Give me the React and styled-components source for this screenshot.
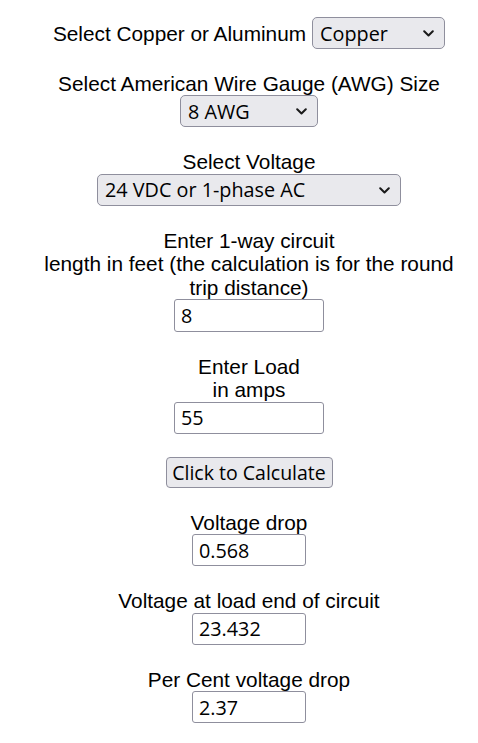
import React from "react";
import styled, { createGlobalStyle } from "styled-components";

const Global = createGlobalStyle`
  html, body { margin: 0; padding: 0; background: #ffffff; }
  body {
    font-family: "Liberation Sans", Arial, sans-serif;
    font-size: 20.8px;
    color: #000000;
  }
`;

const Page = styled.div`
  display: flex;
  flex-direction: column;
  align-items: center;
  gap: 23px;
  padding: 17px 0 30px 20px;
`;

const InlineRow = styled.div`
  display: flex;
  align-items: center;
  gap: 6px;
  line-height: 23px;
`;

const Field = styled.div`
  display: flex;
  flex-direction: column;
  align-items: center;
`;

const Label = styled.div`
  line-height: 23.4px;
  text-align: center;
  max-width: 440px;
`;

const SelectWrap = styled.div`
  position: relative;
  width: ${(p) => p.$w}px;
  height: 32px;
`;

const Select = styled.select`
  appearance: none;
  -webkit-appearance: none;
  box-sizing: border-box;
  width: 100%;
  height: 100%;
  margin: 0;
  padding: 0 26px 0 7px;
  font-family: "Open Sans", "Noto Sans", sans-serif;
  font-size: 19.8px;
  color: #000;
  background: #e9e9ed;
  border: 1px solid #8f8f9d;
  border-radius: 5px;
  outline: none;
`;

const Chevron = styled.svg`
  position: absolute;
  right: 11px;
  top: 50%;
  margin-top: -3px;
  pointer-events: none;
`;

const Input = styled.input`
  box-sizing: border-box;
  width: ${(p) => p.$w}px;
  height: ${(p) => p.$h}px;
  margin: 0;
  padding: 0 6px;
  font-family: "Open Sans", "Noto Sans", sans-serif;
  font-size: 19.8px;
  color: #000;
  background: #ffffff;
  border: 1px solid #8f8f9d;
  border-radius: 3px;
  outline: none;
`;

const Button = styled.button`
  box-sizing: border-box;
  width: 167px;
  height: 31px;
  margin: 0;
  padding: 0;
  font-family: "Open Sans", "Noto Sans", sans-serif;
  font-size: 19.5px;
  color: #000;
  background: #e9e9ed;
  border: 1px solid #8f8f9d;
  border-radius: 4px;
  cursor: pointer;
`;

function Dropdown({ width, value, options }) {
  return (
    <SelectWrap $w={width}>
      <Select defaultValue={value}>
        {options.map((o) => (
          <option key={o} value={o}>
            {o}
          </option>
        ))}
      </Select>
      <Chevron width="11" height="7" viewBox="0 0 11 7" aria-hidden="true">
        <polyline
          points="1.2,1.2 5.5,5.5 9.8,1.2"
          fill="none"
          stroke="#1a1a1a"
          strokeWidth="2"
          strokeLinecap="round"
          strokeLinejoin="round"
        />
      </Chevron>
    </SelectWrap>
  );
}

export default function App() {
  return (
    <>
      <Global />
      <Page>
        <InlineRow>
          <span>Select Copper or Aluminum</span>
          <Dropdown width={133} value="Copper" options={["Copper", "Aluminum"]} />
        </InlineRow>

        <Field>
          <Label>Select American Wire Gauge (AWG) Size</Label>
          <Dropdown
            width={138}
            value="8 AWG"
            options={["14 AWG", "12 AWG", "10 AWG", "8 AWG", "6 AWG", "4 AWG", "2 AWG"]}
          />
        </Field>

        <Field>
          <Label>Select Voltage</Label>
          <Dropdown
            width={304}
            value="24 VDC or 1-phase AC"
            options={["12 VDC or 1-phase AC", "24 VDC or 1-phase AC", "120 VAC 1-phase"]}
          />
        </Field>

        <Field>
          <Label>
            Enter 1-way circuit
            <br />
            length in feet (the calculation is for the round trip distance)
          </Label>
          <Input $w={150} $h={33} defaultValue="8" />
        </Field>

        <Field>
          <Label>
            Enter Load
            <br />
            in amps
          </Label>
          <Input $w={150} $h={32} defaultValue="55" />
        </Field>

        <Button type="button">Click to Calculate</Button>

        <Field>
          <Label>Voltage drop</Label>
          <Input $w={114} $h={32} defaultValue="0.568" readOnly />
        </Field>

        <Field>
          <Label>Voltage at load end of circuit</Label>
          <Input $w={114} $h={32} defaultValue="23.432" readOnly />
        </Field>

        <Field>
          <Label>Per Cent voltage drop</Label>
          <Input $w={114} $h={32} defaultValue="2.37" readOnly />
        </Field>
      </Page>
    </>
  );
}
